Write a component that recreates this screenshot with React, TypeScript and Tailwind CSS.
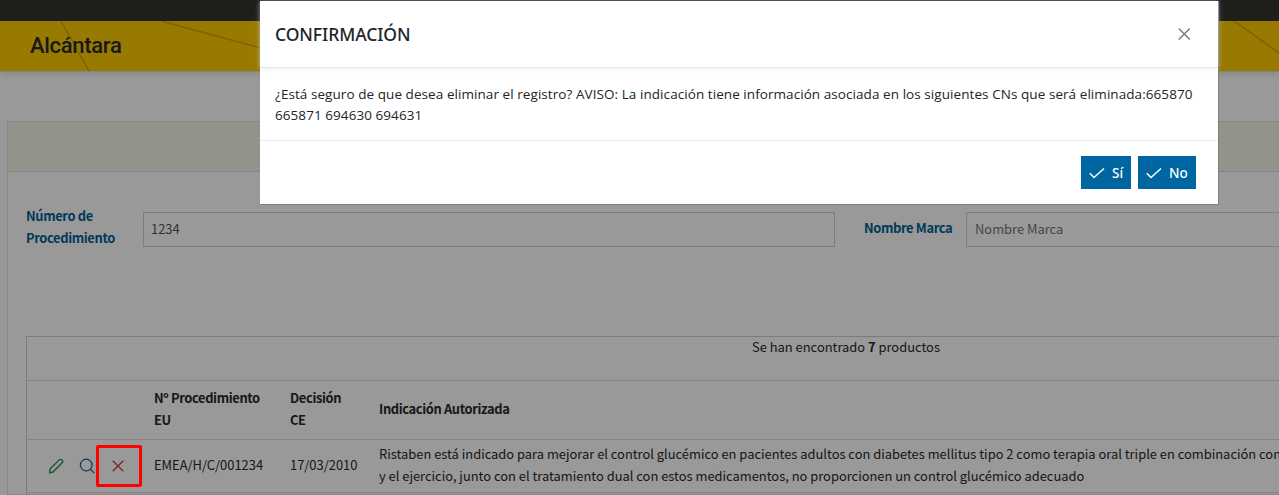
import React from "react";

const body = "font-['Noto_Sans_CJK_SC',sans-serif]";

function Check() {
  return (
    <svg className="-mt-0.5 block h-4 w-4 shrink-0" viewBox="0 0 16 16" fill="none" stroke="#fff" strokeWidth="1.5">
      <path d="M.8 8.3 5 12.5 15 3.5" />
    </svg>
  );
}

function Header() {
  return (
    <header className="relative z-10 shrink-0">
      <div className="h-[21px] bg-[#32322d]" />
      <div className="relative flex h-[50px] items-center overflow-hidden bg-[#ffcc00] pb-px pl-[30px]">
        <svg className="absolute inset-0 h-[50px] w-[1279px]" viewBox="0 0 1279 50" fill="none" stroke="#d5a300" strokeWidth="1.5">
          <path d="M61 0 89 50M161 0 275 31M1234 0 1279 32" />
        </svg>
        <span className="relative font-[Roboto,sans-serif] text-[22px] font-medium tracking-[-0.3px] text-[#282828]">
          Alcántara
        </span>
      </div>
      <div className="h-px bg-[#dadada] shadow-[0_2px_4px_rgba(0,0,0,0.4)]" />
    </header>
  );
}

function Filters() {
  return (
    <div className="flex h-[164px] pt-10 pl-[18px] text-[12.9px] leading-[22px]">
      <div className="-mt-[7px] w-[117px] font-bold tracking-[-0.36px] text-[#005f96]">
        Número de
        <br />
        Procedimiento
      </div>
      <div className="flex h-[35px] w-[692px] items-center border border-[#cfcfda] pb-px pl-[7px] text-[#555]">1234</div>
      <div className="mt-[5px] ml-[29px] w-[102px] font-bold tracking-[-0.36px] text-[#005f96]">Nombre Marca</div>
      <div className="flex h-[35px] w-[692px] items-center border border-[#cfcfda] pb-px pl-2 text-[#757575]">Nombre Marca</div>
    </div>
  );
}

function Results() {
  return (
    <div className="ml-[18px] w-[1640px] border border-[#cfcfd4] text-[12.9px] leading-[22px] text-[#282828]">
      <div className="-mt-px h-11 text-center">
        Se han encontrado <b className="font-bold">7</b> productos
      </div>
      <div className="flex h-[59px] items-center border-t border-[#dcdcdc] pb-0.5 pl-[127px] font-bold tracking-[-0.36px]">
        <div className="w-[136px]">
          Nº Procedimiento
          <br />
          EU
        </div>
        <div className="w-[89px]">
          Decisión
          <br />
          CE
        </div>
        <div>Indicación Autorizada</div>
      </div>
      <div className="flex h-[53px] items-center border-t border-[#dcdcdc] pb-0.5 pl-[21px]">
        <div className="flex w-[106px] items-center pt-px">
          <svg className="h-4 w-4" viewBox="0 0 16 16" fill="none" stroke="#278342" strokeWidth="1.3" strokeLinejoin="round">
            <path d="M1.6 14.8 2 11 11.2 1.9Q12.5.8 14 2T14.2 4.8L5 14Z" />
          </svg>
          <svg className="ml-[15px] h-4 w-4" viewBox="0 0 16 16" fill="none" stroke="#2d5c91" strokeWidth="1.25">
            <circle cx="7.2" cy="7" r="5.8" />
            <path d="m11.3 11.1 4 4" />
          </svg>
          <svg className="ml-[15px] h-4 w-4" viewBox="0 0 16 16" fill="none" stroke="#d63440" strokeWidth="1.3">
            <path d="m2.7 2.7 10.6 10.6M13.3 2.7 2.7 13.3" />
          </svg>
        </div>
        <div className="w-[136px]">EMEA/H/C/001234</div>
        <div className="w-[89px]">17/03/2010</div>
        <div className="whitespace-nowrap">
          Ristaben está indicado para mejorar el control glucémico en pacientes adultos con diabetes mellitus tipo 2 como terapia oral triple en combinación con
          <br />y el ejercicio, junto con el tratamiento dual con estos medicamentos, no proporcionen un control glucémico adecuado
        </div>
      </div>
      <div className="h-10 border-t border-[#dcdcdc]" />
    </div>
  );
}

function Confirm() {
  return (
    <div role="dialog" className="h-[204px] w-[959px] border-r border-b border-[#808080] bg-white font-['Open_Sans',sans-serif] text-[#212529]">
      <div className="relative flex h-[67px] items-center justify-between border-b border-[#e0e6ef] pr-[26px] pl-[15px] shadow-[0_0_5px_rgba(205,220,245,0.65)]">
        <h1 className="font-['Noto_Sans',sans-serif] text-[17.5px] font-medium tracking-[-0.07px]">CONFIRMACIÓN</h1>
        <svg className="h-4 w-4" viewBox="0 0 16 16" fill="none" stroke="#747b83" strokeWidth="1.5">
          <path d="m2.8 2.5 11 11M13.8 2.5l-11 11" />
        </svg>
      </div>
      <p className="h-[73px] border-b border-[#e9ecef] pt-4 pl-[15px] text-[13.5px] leading-[21px] tracking-[0.065px] whitespace-nowrap">
        ¿Está seguro de que desea eliminar el registro? AVISO: La indicación tiene información asociada en los siguientes CNs que será eliminada:665870
        <br />
        665871 694630 694631
      </p>
      <div className="flex justify-end gap-[7px] pt-[15px] pr-[22px] font-['Noto_Sans',sans-serif] text-[13.5px] font-medium text-white">
        <button className="flex h-[33px] w-[50px] items-center gap-[7px] bg-[#0066a1] pt-0.5 pl-2">
          <Check />
          Sí
        </button>
        <button className="flex h-[33px] w-[58px] items-center gap-[7px] bg-[#0066a1] pt-0.5 pl-2">
          <Check />
          No
        </button>
      </div>
    </div>
  );
}

export default function App() {
  return (
    <div className={`relative h-[495px] w-full overflow-hidden bg-white ${body}`}>
      <div className="flex h-[495px] flex-col">
        <Header />
        <main className="mt-[49px] ml-[7px] h-[374px] w-[1700px] shrink-0 border border-[#dfdfdf]">
          <div className="h-[50px] border-b border-[#dadada] bg-[#f5f6ea]" />
          <Filters />
          <Results />
        </main>
      </div>
      <div className="absolute inset-0 z-20 bg-black/40 pt-px pl-[260px]">
        <Confirm />
      </div>
      <div className="absolute top-[445px] left-24 z-30 h-[42px] w-[46px] rounded-[2px] border-[3px] border-[#ff0000]" />
    </div>
  );
}
